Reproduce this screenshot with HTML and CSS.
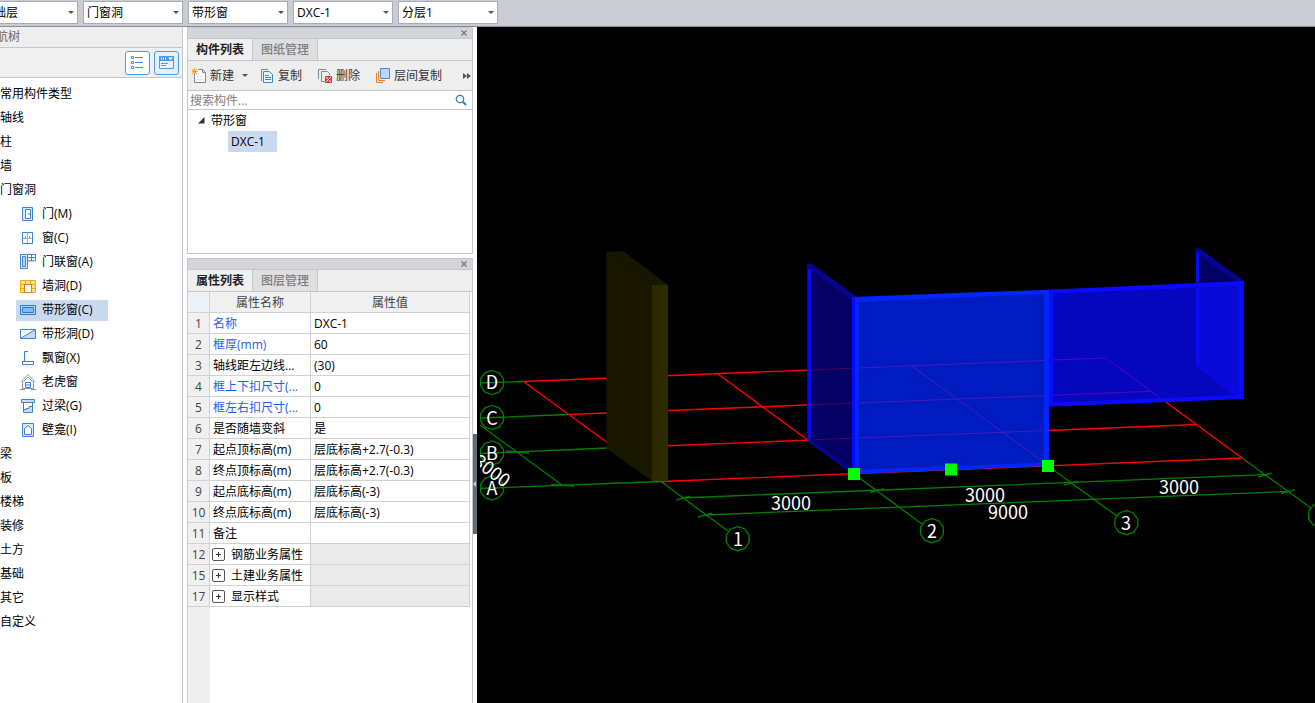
FILE: index.html
```html
<!DOCTYPE html>
<html lang="zh-CN">
<head>
<meta charset="utf-8">
<title>构件</title>
<link rel="stylesheet" href="styles.css">
</head>
<body>
<div class="app">
  <header class="topbar">
    <span class="combo"><select aria-label="楼层"><option>基础层</option></select></span>
    <span class="combo"><select aria-label="类别"><option>门窗洞</option></select></span>
    <span class="combo"><select aria-label="类型"><option>带形窗</option></select></span>
    <span class="combo"><select aria-label="构件"><option>DXC-1</option></select></span>
    <span class="combo"><select aria-label="分层"><option>分层1</option></select></span>
  </header>
  <div class="main">
    <nav class="nav">
      <h2 class="nav-title"><span class="nav-name">导航树</span></h2>
      <div class="nav-tools">
        <button class="view-btn" aria-label="列表视图"><svg width="15" height="16" viewBox="0 0 15 16" fill="none" stroke="#3f8ede"><path d="M1.500 1.500h2v2h-2zM1.500 6.500h2v2h-2zM1.500 11.500h2v2h-2zM5 2.500h8M5 7.500h8M5 12.500h8"/></svg></button>
        <button class="view-btn on" aria-label="卡片视图"><svg width="15" height="14" viewBox="0 0 15 14"><path d="M.5.500h14v12H.5z" fill="#e8f3fd" stroke="#4a9be8"/><path d="M0 0h15v5H0z" fill="#4a9be8"/><path d="M2 2.500h1M4 2.500h1M6 2.500h1" stroke="#fff" stroke-width="2"/><path d="M9 1.500h5l-2.500 2.500z" fill="#fff"/><path d="M2 7.500h7M2 9.500h5" stroke="#4a9be8"/></svg></button>
      </div>
      <ul class="tree">
        <li class="row">常用构件类型</li>
        <li class="row">轴线</li>
        <li class="row">柱</li>
        <li class="row">墙</li>
        <li class="row">门窗洞</li>
        <li class="row sub"><span class="leaf"><svg class="ico" viewBox="0 0 16 16" fill="none" stroke="#3c83d2"><path d="M2.500 1.500h10v13h-10z" fill="#dceafb"/><path d="M5.500 3.500h5v9h-5z" fill="#fff"/><path d="M9 7v2"/></svg>门(M)</span></li>
        <li class="row sub"><span class="leaf"><svg class="ico" viewBox="0 0 16 16" fill="none" stroke="#3c83d2"><path d="M2.500 2.500h10v11h-10z"/><path d="M7.500 3v10M3 8.500h9" stroke="#8fb9e6"/><path d="M5.500 6.500v1.500M9.500 6.500v1.500"/></svg>窗(C)</span></li>
        <li class="row sub"><span class="leaf"><svg class="ico" viewBox="0 0 16 16" fill="none" stroke="#3c83d2"><path d="M.5.500h7v14h-7z" fill="#dceafb"/><path d="M2.500 2.500h3v10h-3z" fill="#b9d7f6"/><path d="M8 .5h7.500v6.500H8M11.500 0v7M8 3.500h7"/></svg>门联窗(A)</span></li>
        <li class="row sub"><span class="leaf"><svg class="ico" viewBox="0 0 16 16" fill="none" stroke="#f5ab19"><path d="M.5 2.500h15v12H.5z" fill="#ffe08c"/><path d="M0 6.500h16M0 10.500h16M5.500 2v4M10.500 2v4"/><path d="M4.500 6.500h7v8h-7z" fill="#fff" stroke="#e8772c"/></svg>墙洞(D)</span></li>
        <li class="row sub"><span class="leaf selected"><svg class="ico" viewBox="0 0 16 16" fill="none" stroke="#2a78c8"><path d="M.5 3.500h15v9H.5z" fill="#b4d8fa"/><path d="M2.500 5.500h11v5h-11z" fill="#80bdf0"/></svg>带形窗(C)</span></li>
        <li class="row sub"><span class="leaf"><svg class="ico" viewBox="0 0 16 16" fill="none" stroke="#3c83d2"><path d="M15 3v10H1z" fill="#c8ddf5" stroke="none"/><path d="M.5 3.500h15v9H.5zM1 12L15 4"/></svg>带形洞(D)</span></li>
        <li class="row sub"><span class="leaf"><svg class="ico" viewBox="0 0 16 16" fill="none" stroke="#3c83d2"><path d="M8 1.500H4.500v10M2.500 11.500h11v3h-11z"/></svg>飘窗(X)</span></li>
        <li class="row sub"><span class="leaf"><svg class="ico" viewBox="0 0 16 16" fill="none" stroke="#8c979f"><path d="M.5 8L8 .7 15.500 8M2.500 7.500v7h11v-7M0 15.500h5M11 15.500h5M3 8l5-5 5 5"/><path d="M5.500 8.500h5v5h-5zM5.500 11h5" stroke="#3c83d2"/></svg>老虎窗</span></li>
        <li class="row sub"><span class="leaf"><svg class="ico" viewBox="0 0 16 16" fill="none" stroke="#3c83d2"><path d="M1.500 1.500h13v3h-13z" fill="#c8ddf5"/><path d="M4 12l3-2h2l3-2v6H4z" fill="#c8ddf5" stroke="none"/><path d="M3.500 4.500v10h9v-10M4 11.500h2v-1h3v-2h3"/></svg>过梁(G)</span></li>
        <li class="row sub"><span class="leaf"><svg class="ico" viewBox="0 0 16 16" fill="none" stroke="#3c83d2"><path d="M2.500 1.500h11v13h-11z" fill="#dceafb"/><path d="M4.500 12.500V6.500L8 3.500l3.500 3v6z" fill="#fff"/></svg>壁龛(I)</span></li>
        <li class="row">梁</li>
        <li class="row">板</li>
        <li class="row">楼梯</li>
        <li class="row">装修</li>
        <li class="row">土方</li>
        <li class="row">基础</li>
        <li class="row">其它</li>
        <li class="row">自定义</li>
      </ul>
    </nav>
    <div class="docks">
      <section class="dock list-dock">
        <div class="strip"><button class="close" aria-label="关闭构件列表"><svg width="6" height="6" viewBox="0 0 6 6" stroke="#777a80" stroke-width="1.400"><path d="M.5.500l5 5M5.500.500l-5 5"/></svg></button></div>
        <div class="tabs"><button class="tab active">构件列表</button><button class="tab">图纸管理</button></div>
        <div class="tools">
          <button class="tool new"><svg class="ico" viewBox="0 0 16 16" fill="none"><path d="M2.500 6v8.500h11V4.500l-3-3H6" fill="#f8fafb" stroke="#7d8a94"/><path d="M10.500 1.500v3h3" stroke="#7d8a94"/><path d="M5 8.500h6M5 11.500h6" stroke="#dde2e6"/><path d="M0 1l5 5M5 1L0 6M2.500 0v6M0 3.500h6" stroke="#f3a11d"/></svg>新建<i class="caret"></i></button>
          <button class="tool copy"><svg class="ico" viewBox="0 0 16 16" fill="none"><path d="M1.500 13V1.500H8" stroke="#7d8a94"/><path d="M3.500 3.500h6l3 3v8h-9z" fill="#eef5fd" stroke="#3c83d2"/><path d="M5 7.500h4M5 9.500h6M5 11.500h6" stroke="#3c83d2"/></svg>复制</button>
          <button class="tool del"><svg class="ico" viewBox="0 0 16 16" fill="none"><path d="M.5 11V1.500H8M7 13.500H3.500v-10h6l2 2V7" stroke="#7d8a94"/><path d="M7 8h7v7H7z" fill="#d64545"/><path d="M8 9l5 5M13 9l-5 5" stroke="#ffe1e1"/></svg>删除</button>
          <button class="tool"><svg class="ico" viewBox="0 0 16 16" fill="none"><path d="M.5 5v9.500H7M2.500 3v9.500H9" stroke="#ef7d22"/><path d="M4.500.500h9v10h-9z" fill="#b9d7fb" stroke="#3c8be0"/></svg>层间复制</button>
          <button class="more" aria-label="更多"><svg width="8" height="6" viewBox="0 0 8 6"><path d="M0 0l4 3-4 3zM4 0l4 3-4 3z" fill="#555"/></svg></button>
        </div>
        <div class="search"><input type="text" placeholder="搜索构件..." aria-label="搜索构件"><svg width="12" height="12" viewBox="0 0 12 12" fill="none" stroke="#2484b8"><circle cx="5" cy="5" r="3.700" stroke-width="1.300"/><path d="M8 8l3 3" stroke-width="2"/></svg></div>
        <div class="parts">
          <div class="part-group"><svg width="7" height="7" viewBox="0 0 7 7"><path d="M6.500 0v6.500H0z" fill="#333"/></svg>带形窗</div>
          <div class="part">DXC-1</div>
        </div>
      </section>
      <section class="dock props-dock">
        <div class="strip"><button class="close" aria-label="关闭属性列表"><svg width="6" height="6" viewBox="0 0 6 6" stroke="#777a80" stroke-width="1.400"><path d="M.5.500l5 5M5.500.500l-5 5"/></svg></button></div>
        <div class="tabs"><button class="tab active">属性列表</button><button class="tab">图层管理</button></div>
        <div class="sheet">
        <table class="props">
          <colgroup><col class="c-num"><col class="c-name"><col></colgroup>
          <thead><tr><th class="corner"></th><th>属性名称</th><th>属性值</th></tr></thead>
          <tbody>
            <tr><th>1</th><td class="key">名称</td><td>DXC-1</td></tr>
            <tr><th>2</th><td class="key">框厚(mm)</td><td>60</td></tr>
            <tr><th>3</th><td>轴线距左边线...</td><td>(30)</td></tr>
            <tr><th>4</th><td class="key">框上下扣尺寸(...</td><td>0</td></tr>
            <tr><th>5</th><td class="key">框左右扣尺寸(...</td><td>0</td></tr>
            <tr><th>6</th><td>是否随墙变斜</td><td>是</td></tr>
            <tr><th>7</th><td>起点顶标高(m)</td><td>层底标高+2.7(-0.3)</td></tr>
            <tr><th>8</th><td>终点顶标高(m)</td><td>层底标高+2.7(-0.3)</td></tr>
            <tr><th>9</th><td>起点底标高(m)</td><td>层底标高(-3)</td></tr>
            <tr><th>10</th><td>终点底标高(m)</td><td>层底标高(-3)</td></tr>
            <tr><th>11</th><td>备注</td><td></td></tr>
            <tr><th>12</th><td><button class="plus" aria-label="展开"></button>钢筋业务属性</td><td class="off"></td></tr>
            <tr><th>15</th><td><button class="plus" aria-label="展开"></button>土建业务属性</td><td class="off"></td></tr>
            <tr><th>17</th><td><button class="plus" aria-label="展开"></button>显示样式</td><td class="off"></td></tr>
          </tbody>
        </table>
        </div>
      </section>
    </div>
    <div class="splitter"><button class="grip" aria-label="收起面板"><svg width="3" height="6" viewBox="0 0 3 6"><path d="M3 0v6L0 3z" fill="#c9ced4"/></svg></button></div>
    <main class="view">
      <svg class="scene" viewBox="477 27 838 676" preserveAspectRatio="xMinYMin meet">
        <defs>
          <polygon id="bubble" points="0,-12 7,-9.700 11.400,-3.700 11.400,3.700 7,9.700 0,12 -7,9.700 -11.400,3.700 -11.400,-3.700 -7,-9.700"/>
          <clipPath id="edge"><path d="M480 27h835v676H480z"/></clipPath>
        </defs>
        <g class="red">
          <path d="M523.500 381.500L1106 358M568.500 414.500L1151.500 391.300M668 445.700L1196.700 424.500M661 481.500L1242 458"/>
          <path d="M523.500 381.500L661 481.500M718 374L854 474M1106 358L1242 458"/>
        </g>
        <g class="green">
          <path d="M480 383L523.500 381.500M480 418L568.500 414.500M480 453.500L607 448M480 488.500L661 481.500"/>
          <path d="M661 481.500L728 531M854 474L922 524M1048 466L1117 516M1242 458L1311 508"/>
          <path d="M681 498L1265 474.700M704 515L1288 491.500"/>
          <path d="M676 500l14-4M870 492.500l14-4M1064 485l14-4M1258 477l14-4M698 517l14-4M1281 493.500l14-4"/>
          <path d="M480 425L562 485M506 451l23 2M551 484.500l23 1.500"/>
          <use href="#bubble" x="492" y="382.500"/><use href="#bubble" x="492" y="417.500"/><use href="#bubble" x="492" y="453"/><use href="#bubble" x="492" y="488"/>
          <use href="#bubble" x="737.700" y="538.700"/><use href="#bubble" x="932" y="530.700"/><use href="#bubble" x="1126.300" y="522.700"/><use href="#bubble" x="1320" y="515"/>
        </g>
        <path d="M606.500 252L652 285V481L606.500 448.500z" fill="#191700"/>
        <path d="M606.500 252L623 251 668 285H652z" fill="#171600"/>
        <path d="M652 285h16v196h-16z" fill="#2b2a00"/>

        <path d="M807 264L855 297V474L807 441z" fill="#040066"/>
        <path d="M807 263.500h4L857 297l-5 3-45-32zM807 436l45 33v5l-45-33z" fill="#04048c"/>
        <path d="M807.500 269h3.500v168l-3.500 3z" fill="#0a0af5"/>
        <path d="M811 369.900L852 368.200M811 404.900L852 403.200M816 439.700L852 438.200" stroke="#4c005c"/>

        <path d="M1195.500 248h3.500L1244 281v10h-48z" fill="#040066"/>
        <path d="M1195.500 248h3.500L1244 281l-7 1-41.500-29z" fill="#04048c"/>
        <path d="M1196 253h3v33h-3z" fill="#0a0af5"/>
        <path d="M1047 289.700L1244 281V399L1047 406.700z" fill="#0a0aff"/>
        <path d="M1053 293.500L1238.500 286V395L1053 402.500z" fill="#0606be"/>
        <path d="M1195.500 288L1238.500 286v109h-5L1195.500 366z" fill="#0909d8"/>
        <path d="M1195.500 362l43 31v2h-5L1195.500 366z" fill="#0909e2"/>
        <path d="M1196 288h3v76l-3-1z" fill="#0c0cf8"/>
        <path d="M1053 360L1106 358 1160 398M1053 395.200L1151.500 391.300" stroke="#5206b8" fill="none"/>

        <path d="M852 297L1049 289.700V466L852 474z" fill="#0026ff"/>
        <path d="M852 297h3v175h-3z" fill="#0a0aff"/>
        <path d="M859 301.700L1044 294V462.500L859 469.700z" fill="#001cc0"/>
        <path d="M859 368L1044 360.500M859 402.900L1044 395.600M859 438L1044 430.600M912 366L1042 461" stroke="#4c18c0"/>
        <path d="M848 468h12v12h-12zM945 463.500h12v12h-12zM1042 460h12v12h-12z" fill="#00ff00"/>
        <g class="labels">
          <text x="492" y="389">D</text><text x="492" y="425">C</text><text x="492" y="460">B</text><text x="492" y="495">A</text>
          <text x="738" y="546">1</text><text x="932" y="538">2</text><text x="1126" y="530">3</text>
          <text x="791" y="510">3000</text><text x="985" y="502">3000</text><text x="1179" y="494">3000</text><text x="1008" y="519">9000</text>
          <g clip-path="url(#edge)"><text transform="translate(488 476) rotate(37)">3000</text></g>
        </g>
      </svg>
    </main>
  </div>
</div>
</body>
</html>
```
FILE: styles.css
```css
* { box-sizing: border-box; }
body, h2, ul { margin: 0; padding: 0; }
body, button, input, select {
  font: 12px/16px "Open Sans", "Noto Sans CJK SC", sans-serif;
  color: #000;
}
button { border: 0; padding: 0; background: none; }
svg { display: block; flex: none; }
.app { height: 100vh; display: flex; flex-direction: column; overflow: hidden; background: #fff; }

.topbar {
  display: flex; gap: 5px; flex: none;
  height: 27px; padding: 1px 0; margin-left: -22px;
  background: #c9ccd3; border-bottom: 1px solid #8b8e95;
}
.combo { position: relative; width: 100px; height: 23px; }
.combo select {
  width: 100%; height: 100%; padding: 0 3px; appearance: none;
  border: 1px solid #a9acb2; border-radius: 0; background: #fff;
}
.combo::after, .caret { border: 3px solid transparent; border-top-color: #555; border-bottom: 0; }
.combo::after { content: ""; position: absolute; right: 4px; top: 10px; }

.main { flex: 1; min-height: 0; display: flex; }
.nav { width: 183px; flex: none; border-right: 1px solid #c3c6cc; overflow: hidden; }
.nav-title { display: flex; height: 21px; background: #eee; border-bottom: 1px solid #c3c6cc; font-size: 12px; line-height: 20px; font-weight: 400; color: #666; }
.nav-name { margin-left: -16px; }
.nav-tools { display: flex; justify-content: flex-end; align-items: center; gap: 4px; height: 30px; padding-right: 3px; background: #f0f0f0; border-bottom: 1px solid #c3c6cc; }
.view-btn { display: flex; align-items: center; justify-content: center; width: 25px; height: 24px; border: 1px solid #4a9be8; border-radius: 3px; background: #fff; }
.view-btn.on { background: #e3f0fd; }
.tree { list-style: none; padding-top: 4px; }
.row { height: 24px; display: flex; align-items: center; white-space: nowrap; }
.sub { padding-left: 16px; }
.leaf { display: flex; align-items: center; gap: 6px; height: 21px; padding: 0 15px 0 4px; }
.selected { background: #c9d9f0; }
.ico { width: 16px; height: 16px; }

.docks { width: 290px; flex: none; padding-left: 4px; display: flex; flex-direction: column; gap: 4px; }
.dock { border: 1px solid #c3c6cc; display: flex; flex-direction: column; background: #fff; }
.list-dock { height: 227px; flex: none; }
.props-dock { flex: 1; min-height: 0; border-bottom: 0; }
.strip { height: 11px; flex: none; display: flex; align-items: center; justify-content: flex-end; padding-right: 5px; background: #d3d5da; border-bottom: 1px solid #c3c6cc; }
.tabs { display: flex; height: 22px; flex: none; background: #eee; border-bottom: 1px solid #c3c6cc; }
.tab { width: 65px; border-right: 1px solid #c3c6cc; background: #dfdfdf; color: #808080; font-weight: 500; }
.tab.active { background: #f0f0f0; color: #222; font-weight: 700; }
.tools { display: flex; align-items: center; height: 30px; flex: none; padding: 0 1px 0 4px; background: #eee; border-bottom: 1px solid #c3c6cc; }
.tool { display: flex; align-items: center; gap: 2px; color: #333; white-space: nowrap; }
.new, .copy, .del { margin-right: 16px; }
.new { margin-right: 12px; }
.new .caret { margin-left: 6px; }
.more { margin-left: auto; }
.search { display: flex; align-items: center; height: 19px; flex: none; padding-right: 5px; border-bottom: 1px solid #c3c6cc; }
.search input { flex: 1; min-width: 0; height: 18px; border: 0; padding: 0 2px; background: none; }
.search input::placeholder { color: #808080; opacity: 1; }
.parts { flex: 1; }
.part-group { display: flex; align-items: center; gap: 6px; height: 21px; padding-left: 10px; }
.part { width: 49px; margin-left: 40px; height: 21px; line-height: 21px; padding-left: 3px; background: #c9d9f0; }

.sheet { flex: 1; padding-right: 2px; background: linear-gradient(to right, #efefef 22px, #fff 22px); }
.props { width: 100%; table-layout: fixed; border-collapse: separate; border-spacing: 0; }
.c-num { width: 22px; }
.c-name { width: 101px; }
.props th, .props td { height: 21px; padding: 2px 0 0 3px; border-right: 1px solid #d2d2d2; border-bottom: 1px solid #d2d2d2; font-weight: 400; white-space: nowrap; overflow: hidden; text-align: left; }
.props td { background: #fff; }
.props th { padding: 2px 0 0; text-align: center; background: #f0f0f0; color: #444; }
.props .corner { background: #edf2f8; }
.props .key { color: #1f5cf5; }
.props .off { background: #eaeaea; }
.plus {
  width: 13px; height: 13px; margin: 0 6px 0 -1px; vertical-align: -1px;
  border: 1px solid #555; border-radius: 2px;
  background: linear-gradient(#333, #333) center / 5px 1px no-repeat, linear-gradient(#333, #333) center / 1px 5px no-repeat, #fff;
}
.splitter { width: 4px; flex: none; display: flex; align-items: flex-end; padding-bottom: 169px; background: #fff; }
.grip { width: 4px; height: 100px; display: flex; align-items: center; background: #5f6b77; }
.view { flex: 1; min-width: 0; background: #000; overflow: hidden; }
.scene { width: 100%; height: 100%; }
.red { stroke: #f00; stroke-width: 1.400; fill: none; }
.green { stroke: #008000; stroke-width: 1.300; fill: none; }
.labels { fill: #fff; font: 18px "Noto Sans CJK SC", sans-serif; text-anchor: middle; }
```
